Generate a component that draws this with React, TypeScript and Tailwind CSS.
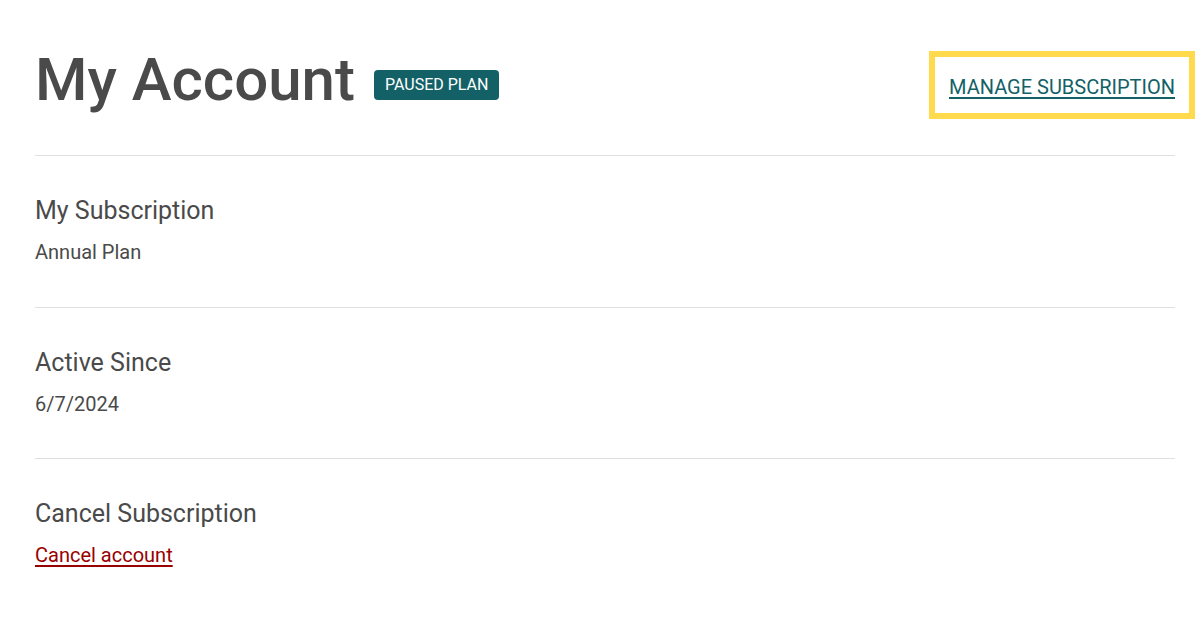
import React from "react";

function Section({ title, children, last, pb }: { title: string; children: React.ReactNode; last?: boolean; pb?: string }) {
  return (
    <div className={`pt-[39px] ${pb ?? "pb-[40px]"} ${last ? "" : "border-b border-[#e0e0e0]"}`}>
      <h2 className="text-[25px] leading-[32px] text-[#4a4a4a] font-normal">{title}</h2>
      <div className="mt-[11px] text-[20px] leading-[28px] text-[#4a4a4a]">{children}</div>
    </div>
  );
}

export default function App() {
  return (
    <div className="min-h-screen bg-white px-[35px] pr-[27px]" style={{ fontFamily: "Roboto, 'Noto Sans', sans-serif" }}>
      <div className="flex items-start justify-between pt-[44px] pb-[39px] border-b border-[#e0e0e0]">
        <div className="flex items-start gap-[19px]">
          <h1 className="text-[60px] leading-[72px] font-medium text-[#4a4a4a]">My Account</h1>
          <span className="mt-[26px] inline-flex h-[30px] items-center rounded-[4px] bg-[#136167] px-[11px] text-[16px] font-normal uppercase text-white">
            Paused Plan
          </span>
        </div>
        <a
          href="#"
          className="mt-[27px] inline-block pt-[5px] text-[20px] leading-[23px] uppercase text-[#136167] underline underline-offset-[3px] outline-[6px] outline-solid outline-[#ffda4d] outline-offset-[14px]"
        >
          Manage Subscription
        </a>
      </div>
      <Section title="My Subscription" pb="pb-[41px]">Annual Plan</Section>
      <Section title="Active Since">6/7/2024</Section>
      <Section title="Cancel Subscription" last>
        <a href="#" className="text-[#990000] underline underline-offset-[3px]">Cancel account</a>
      </Section>
    </div>
  );
}
